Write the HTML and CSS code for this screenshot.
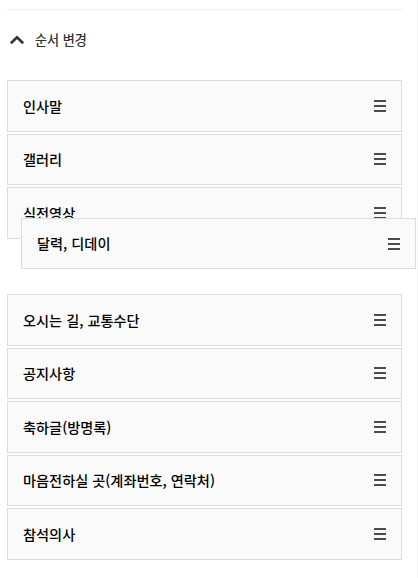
FILE: index.html
```
<!DOCTYPE html>
<html lang="ko">
<head>
<meta charset="utf-8">
<link rel="stylesheet" href="styles.css">
</head>
<body>
<div class="panel">
  <div class="divider"></div>
  <div class="heading">
    <svg class="chev" width="16" height="10" viewBox="0 0 16 10"><path d="M1.8 8.2 L8 2.2 L14.2 8.2" fill="none" stroke="#333" stroke-width="2.6"/></svg>
    <span class="heading-text">순서 변경</span>
  </div>
  <ul class="list">
    <li class="item"><span class="label">인사말</span><svg class="bars" width="12" height="12" viewBox="0 0 12 12"><rect y="0" width="12" height="2"/><rect y="5" width="12" height="2"/><rect y="10" width="12" height="2"/></svg></li>
    <li class="item"><span class="label">갤러리</span><svg class="bars" width="12" height="12" viewBox="0 0 12 12"><rect y="0" width="12" height="2"/><rect y="5" width="12" height="2"/><rect y="10" width="12" height="2"/></svg></li>
    <li class="item"><span class="label">식전영상</span><svg class="bars" width="12" height="12" viewBox="0 0 12 12"><rect y="0" width="12" height="2"/><rect y="5" width="12" height="2"/><rect y="10" width="12" height="2"/></svg></li>
    <li class="placeholder"></li>
    <li class="item"><span class="label">오시는 길, 교통수단</span><svg class="bars" width="12" height="12" viewBox="0 0 12 12"><rect y="0" width="12" height="2"/><rect y="5" width="12" height="2"/><rect y="10" width="12" height="2"/></svg></li>
    <li class="item"><span class="label">공지사항</span><svg class="bars" width="12" height="12" viewBox="0 0 12 12"><rect y="0" width="12" height="2"/><rect y="5" width="12" height="2"/><rect y="10" width="12" height="2"/></svg></li>
    <li class="item"><span class="label">축하글(방명록)</span><svg class="bars" width="12" height="12" viewBox="0 0 12 12"><rect y="0" width="12" height="2"/><rect y="5" width="12" height="2"/><rect y="10" width="12" height="2"/></svg></li>
    <li class="item"><span class="label">마음전하실 곳(계좌번호, 연락처)</span><svg class="bars" width="12" height="12" viewBox="0 0 12 12"><rect y="0" width="12" height="2"/><rect y="5" width="12" height="2"/><rect y="10" width="12" height="2"/></svg></li>
    <li class="item"><span class="label">참석의사</span><svg class="bars" width="12" height="12" viewBox="0 0 12 12"><rect y="0" width="12" height="2"/><rect y="5" width="12" height="2"/><rect y="10" width="12" height="2"/></svg></li>
  </ul>
  <div class="item dragging"><span class="label">달력, 디데이</span><svg class="bars" width="12" height="12" viewBox="0 0 12 12"><rect y="0" width="12" height="2"/><rect y="5" width="12" height="2"/><rect y="10" width="12" height="2"/></svg></div>
</div>
</body>
</html>
```
FILE: styles.css
```
html, body {
  margin: 0;
  padding: 0;
  background: #fff;
}
body {
  font-family: "Noto Sans CJK KR", "Noto Sans", sans-serif;
}
.panel {
  position: relative;
  box-sizing: border-box;
  width: 418px;
  min-height: 578px;
  padding: 9px 15px 0 7px;
  border-right: 1px solid #f0f0f0;
}
.divider {
  height: 1px;
  background: #eeeeee;
}
.heading {
  height: 60px;
  display: flex;
  align-items: center;
  padding-left: 2px;
  gap: 10px;
}
.chev {
  display: block;
}
.heading-text {
  font-size: 13.1px;
  font-weight: 500;
  color: #333;
  line-height: 1;
}
.list {
  list-style: none;
  margin: 10px 0 0;
  padding: 0;
  display: flex;
  flex-direction: column;
  gap: 2px;
}
.item {
  box-sizing: border-box;
  height: 51.5px;
  display: flex;
  align-items: center;
  justify-content: space-between;
  padding: 0 15px 0 15px;
  background: #fafafa;
  border: 1px solid #dddddd;
}
.placeholder {
  height: 51.5px;
}
.label {
  font-size: 14.2px;
  font-weight: 500;
  color: #000;
  line-height: 1;
}
.bars {
  display: block;
  fill: #4a4a4a;
}
.dragging {
  position: absolute;
  top: 218px;
  left: 21px;
  width: 395px;
  height: 51px;
}
```
